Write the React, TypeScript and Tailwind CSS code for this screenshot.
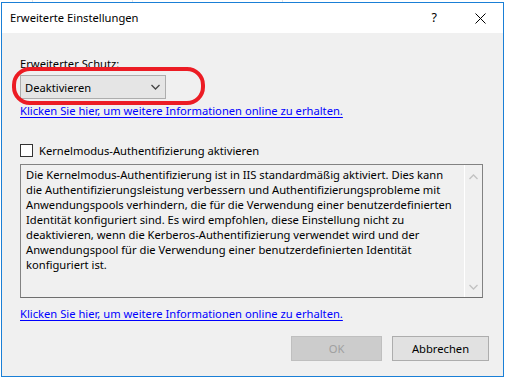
import React from "react";

const font = { fontFamily: '"Noto Sans", "Open Sans", sans-serif' };

const infoLines = [
  "Die Kernelmodus-Authentifizierung ist in IIS standardmäßig aktiviert. Dies kann",
  "die Authentifizierungsleistung verbessern und Authentifizierungsprobleme mit",
  "Anwendungspools verhindern, die für die Verwendung einer benutzerdefinierten",
  "Identität konfiguriert sind. Es wird empfohlen, diese Einstellung nicht zu",
  "deaktivieren, wenn die Kerberos-Authentifizierung verwendet wird und der",
  "Anwendungspool für die Verwendung einer benutzerdefinierten Identität",
  "konfiguriert ist.",
];

function MoreInfoLink() {
  return (
    <a href="#" className="block w-fit text-[11.2px] leading-[15px] text-[#0000ff] underline underline-offset-[2px]">
      Klicken Sie hier, um weitere Informationen online zu erhalten.
    </a>
  );
}

function Chevron({ up, className }: { up?: boolean; className?: string }) {
  return (
    <svg width="9" height="6" viewBox="0 0 9 6" className={className} aria-hidden>
      <polyline
        points={up ? "0.5,5 4.5,1 8.5,5" : "0.5,1 4.5,5 8.5,1"}
        fill="none"
        stroke="currentColor"
        strokeWidth="1.3"
      />
    </svg>
  );
}

export default function App() {
  return (
    <div className="flex h-[379px] w-[505px] flex-col overflow-hidden bg-white" style={font}>
      {/* bits of the window behind */}
      <div className="flex h-[2px] shrink-0">
        <div className="w-[33px] border-r border-[#e3e3e3]" />
        <div className="w-[100px] border-r border-[#e3e3e3]" />
        <div className="w-[150px] border-r border-[#e3e3e3]" />
      </div>

      <div className="ml-[1px] flex h-[375px] w-[503px] flex-col border border-[#1a7fd6]">
        {/* title bar */}
        <div className="flex h-[30px] shrink-0 items-center bg-white pl-[8px] text-[11.2px] text-black">
          <span className="flex-1">Erweiterte Einstellungen</span>
          <span className="mr-[38px] text-[12.5px]">?</span>
          <svg width="11" height="11" viewBox="0 0 11 11" className="mr-[17px]" aria-hidden>
            <path d="M0.5 0.5 L10.5 10.5 M10.5 0.5 L0.5 10.5" stroke="#000" strokeWidth="1" />
          </svg>
        </div>

        {/* body */}
        <div className="relative flex flex-1 flex-col bg-[#f0f0f0] px-[18px] text-[11.2px] leading-[15px] text-black">
          <div className="mt-[23px]">Erweiterter Schutz:</div>

          <div className="mt-[4px] flex h-[24px] w-[146px] items-center justify-between border border-[#adadad] bg-[#e5e5e5] pl-[4px] pr-[5px]">
            <span>Deaktivieren</span>
            <Chevron className="text-[#444]" />
          </div>

          <div className="mt-[4px]">
            <MoreInfoLink />
          </div>

          <div className="mt-[25px] flex h-[15px] items-center gap-[6px]">
            <div className="h-[13px] w-[13px] border border-[#333] bg-white" />
            <span>Kernelmodus-Authentifizierung aktivieren</span>
          </div>

          <div className="mt-[6px] flex h-[134px] w-[463px] border border-[#828282] border-b-[#6e6e6e] bg-[#f0f0f0]">
            <div className="flex-1 whitespace-nowrap pl-[5px] pt-[2px]">
              {infoLines.map((l) => (
                <div key={l}>{l}</div>
              ))}
            </div>
            <div className="flex w-[18px] flex-col items-center justify-between border-l border-white pb-[7px] pt-[9px] text-[#c2c2c2]">
              <Chevron up />
              <Chevron />
            </div>
          </div>

          <div className="mt-[8px]">
            <MoreInfoLink />
          </div>

          <div className="mt-[15px] flex justify-end gap-[10px]">
            <div className="flex h-[25px] w-[91px] items-center justify-center border border-[#bfbfbf] bg-[#cccccc] text-[#a0a0a0]">
              OK
            </div>
            <div className="mr-[-4px] flex h-[25px] w-[97px] items-center justify-center border border-[#adadad] bg-[#e1e1e1]">
              Abbrechen
            </div>
          </div>

          {/* red annotation around the dropdown */}
          <div className="pointer-events-none absolute left-[10px] top-[34px] h-[38px] w-[193px] rounded-[18px] border-[4px] border-[#ec1c24]" />
        </div>
      </div>
    </div>
  );
}
